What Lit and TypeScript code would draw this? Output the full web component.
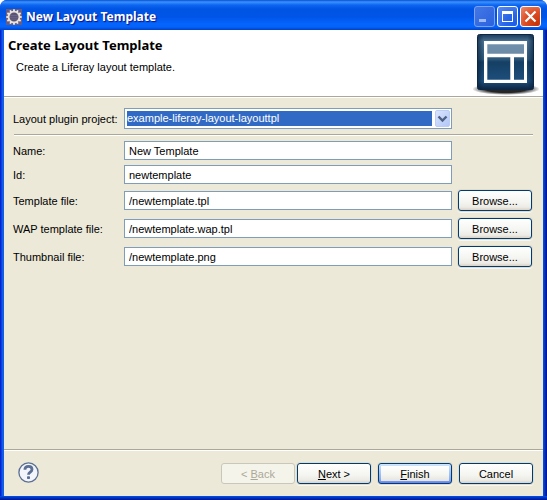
import { LitElement, html, css, svg } from "lit";
import { customElement, property } from "lit/decorators.js";

const gearTeeth = Array.from({ length: 12 }, (_, i) => i * 30);

@customElement("xp-title-bar")
export class XpTitleBar extends LitElement {
  @property() heading = "";

  static styles = css`
    :host {
      display: block;
    }
    .bar {
      display: flex;
      align-items: center;
      box-sizing: border-box;
      height: 30px;
      padding: 3px 6px 0 6px;
      gap: 4px;
      border-radius: 7px 7px 0 0;
      background: linear-gradient(
        #0a4fd0 0,
        #3a93ff 2px,
        #0d66f0 5px,
        #0054e3 9px,
        #0055e8 17px,
        #0465fd 24px,
        #0463f8 27px,
        #0040c8 30px
      );
    }
    .app-icon {
      display: block;
      flex: none;
    }
    .title {
      flex: 1;
      margin: 0;
      color: #fff;
      font: bold 12px/16px "Noto Sans", sans-serif;
      text-shadow: 1px 1px 1px #0f1089;
      white-space: nowrap;
    }
    .controls {
      display: flex;
      gap: 2px;
    }
    button {
      width: 21px;
      height: 21px;
      padding: 0;
      border: 1px solid #fff;
      border-radius: 3px;
      background: radial-gradient(circle at 85% 90%, #1c60e8 0, #2a66e6 40%, #5b8cf2 100%);
    }
    .minimize {
      border-color: #7ba1f0;
      background: linear-gradient(135deg, #4377e6, #2b62dd);
    }
    .close {
      background: radial-gradient(circle at 85% 90%, #c83408 0, #dc4b22 50%, #ee8a6c 100%);
    }
    button svg {
      display: block;
    }
  `;

  render() {
    return html`
      <header class="bar">
        <svg class="app-icon" width="16" height="16" viewBox="0 0 16 16" aria-hidden="true">
          <rect width="16" height="16" fill="#6a5c80" />
          ${gearTeeth.map(
            (a) => svg`<rect x="7.1" y="0.3" width="1.8" height="3" fill="#efece4" transform="rotate(${a} 8 8)" />`
          )}
          <circle cx="8" cy="8" r="5.4" fill="#5a5274" stroke="#e6e2da" stroke-width="1.8" />
          <path d="M4 6.5h8M3.7 8.3h8.6M4.2 10.1h7.6" stroke="#746c90" stroke-width="0.7" />
        </svg>
        <h1 class="title">${this.heading}</h1>
        <div class="controls">
          <button class="minimize" aria-label="Minimize">
            <svg width="19" height="19" viewBox="0 0 19 19"><path d="M4 12h7v3H4z" fill="#9cb9f5" /></svg>
          </button>
          <button class="maximize" aria-label="Maximize">
            <svg width="19" height="19" viewBox="0 0 19 19">
              <path d="M4 4h11v11H4zM5 7v7h9V7z" fill="#fff" fill-rule="evenodd" />
            </svg>
          </button>
          <button class="close" aria-label="Close">
            <svg width="19" height="19" viewBox="0 0 19 19">
              <path d="M4.5 4.5l10 10M14.5 4.5l-10 10" stroke="#fff" stroke-width="2.2" />
            </svg>
          </button>
        </div>
      </header>
    `;
  }
}

@customElement("app-root")
export class AppRoot extends LitElement {
  static styles = css`
    :host {
      display: block;
      color: #000;
      font: 11px/13px "Liberation Sans", Arial, sans-serif;
    }
    .window {
      display: flex;
      flex-direction: column;
      box-sizing: border-box;
      min-height: 100vh;
      border-radius: 7px 7px 0 0;
      background: #0831d9;
    }
    .client {
      flex: 1;
      display: flex;
      flex-direction: column;
      padding: 0 4px 4px;
      background:
        linear-gradient(#0050ee, #00138c) bottom / 100% 4px no-repeat,
        linear-gradient(to right, #0019cf 0, #0831d9 1px, #166aee 3px, #0855dd 4px) left / 4px 100% no-repeat,
        linear-gradient(to left, #00138c 0, #001ea0 1px, #0441d8 3px, #0855dd 4px) right / 4px 100% no-repeat;
    }
    .banner {
      display: flex;
      justify-content: space-between;
      height: 66px;
      background: #fff;
      border-bottom: 1px solid #aca899;
    }
    .banner-text {
      padding: 7px 4px;
    }
    .banner h2 {
      margin: 0;
      font: bold 13px/17px "Noto Sans", sans-serif;
    }
    .banner p {
      margin: 7px 0 0 8px;
    }
    .logo {
      display: block;
      flex: none;
      margin: 3px 4px 0 0;
    }
    .page {
      flex: 1;
      display: flex;
      flex-direction: column;
      background: #ece9d8;
      box-shadow: inset 0 1px 0 #fff;
    }
    .form {
      flex: 1;
      display: grid;
      grid-template-columns: 105px 1fr 74px;
      align-content: start;
      align-items: center;
      gap: 5px 6px;
      padding: 11px 11px 11px 9px;
    }
    label {
      grid-column: 1;
      padding-top: 2px;
      white-space: nowrap;
    }
    .field {
      grid-column: 2;
    }
    input,
    select {
      box-sizing: border-box;
      width: 100%;
      min-width: 0;
      margin: 0;
      border: 1px solid #7f9db9;
      border-radius: 0;
      background: #fff;
      color: #000;
      font: inherit;
    }
    input {
      display: block;
      height: 19px;
      padding: 0 4px;
    }
    .combo {
      display: grid;
      grid-template-columns: 1fr 17px;
      align-items: center;
    }
    select {
      grid-area: 1 / 1 / 2 / 3;
      appearance: none;
      height: 21px;
      padding: 2px 19px 2px 2px;
      background:
        linear-gradient(#316ac5, #316ac5) content-box no-repeat,
        linear-gradient(#fff, #fff) padding-box;
      color: #fff;
    }
    .arrow {
      grid-area: 1 / 2;
      display: block;
      pointer-events: none;
    }
    .rule {
      grid-column: 1 / -1;
      width: 100%;
      height: 1px;
      margin: 0 0 0 1px;
      border: 0;
      border-top: 1px solid #aca899;
      background: #fff;
    }
    .push {
      box-sizing: border-box;
      width: 74px;
      height: 21px;
      margin: 1px 0;
      padding: 2px 0 0;
      border: 1px solid #003c74;
      border-radius: 3px;
      background: linear-gradient(#fff, #f4f4f0 60%, #ecebe5 85%, #d8d1c7);
      box-shadow: 0 0 0 1px #e0ddcd, 0 1px 0 1px #f7f6f0;
      color: #000;
      font: inherit;
      white-space: nowrap;
    }
    .push:disabled {
      border-color: #c9c7ba;
      background: #f5f4ea;
      box-shadow: none;
      color: #aca899;
    }
    .push.default {
      background:
        linear-gradient(#fff, #f4f4f0 60%, #e6e4de) 2px 2px / calc(100% - 4px) calc(100% - 4px) no-repeat,
        linear-gradient(#cee7ff, #bcd4f6 20%, #89adf0 80%, #6982ee);
    }
    .footer {
      display: flex;
      align-items: center;
      height: 45px;
      padding: 1px 10px 0 14px;
      border-top: 1px solid #aca899;
      box-shadow: inset 0 1px 0 #fff;
    }
    .help {
      width: 21px;
      height: 21px;
      margin: 0 auto 2px 0;
      padding: 0;
      border: 0;
      background: none;
    }
    .help svg {
      display: block;
    }
    .steps {
      display: flex;
      gap: 2px;
    }
    .actions {
      display: flex;
      gap: 7px;
    }
  `;

  private files = [
    { id: "template", label: "Template file:", value: "/newtemplate.tpl" },
    { id: "wap", label: "WAP template file:", value: "/newtemplate.wap.tpl" },
    { id: "thumbnail", label: "Thumbnail file:", value: "/newtemplate.png" },
  ];

  private logo() {
    return html`
      <svg class="logo" width="66" height="62" viewBox="0 0 66 62" aria-hidden="true">
        <defs>
          <linearGradient id="tile" x1="0" y1="0" x2="0" y2="1">
            <stop offset="0" stop-color="#1c3c5c" />
            <stop offset="0.12" stop-color="#49708f" />
            <stop offset="0.45" stop-color="#2c5678" />
            <stop offset="0.5" stop-color="#153f64" />
            <stop offset="0.85" stop-color="#1d4f7c" />
            <stop offset="1" stop-color="#0b2440" />
          </linearGradient>
          <linearGradient id="side" x1="0" y1="0" x2="1" y2="0">
            <stop offset="0" stop-color="#08203a" stop-opacity="0.6" />
            <stop offset="0.1" stop-color="#08203a" stop-opacity="0" />
            <stop offset="0.9" stop-color="#08203a" stop-opacity="0" />
            <stop offset="1" stop-color="#08203a" stop-opacity="0.6" />
          </linearGradient>
          <radialGradient id="shade">
            <stop offset="0.6" stop-color="#000" stop-opacity="0.85" />
            <stop offset="1" stop-color="#000" stop-opacity="0" />
          </radialGradient>
        </defs>
        <ellipse cx="33" cy="56" rx="34" ry="6" fill="url(#shade)" />
        <rect x="4.5" y="1.5" width="56" height="55" rx="2" fill="url(#tile)" stroke="#0c2743" />
        <rect x="5" y="2" width="55" height="54" rx="2" fill="url(#side)" />
        <rect x="14" y="11" width="37" height="10" fill="#8fa9c0" opacity="0.6" />
        <path
          fill="#fff"
          fill-rule="evenodd"
          d="M11 8h43v42H11zM14.3 11.3v9.4h36.700V11.300zM14.300 24.300v22.400h23V24.300zM41 24.300v22.400h10V24.300z"
        />
      </svg>
    `;
  }

  render() {
    return html`
      <div class="window">
        <xp-title-bar heading="New Layout Template"></xp-title-bar>
        <main class="client">
          <div class="banner">
            <div class="banner-text">
              <h2>Create Layout Template</h2>
              <p>Create a Liferay layout template.</p>
            </div>
            ${this.logo()}
          </div>
          <div class="page">
            <div class="form">
              <label for="project">Layout plugin project:</label>
              <div class="field combo">
                <select id="project">
                  <option>example-liferay-layout-layouttpl</option>
                </select>
                <svg class="arrow" width="15" height="17" viewBox="0 0 15 17" aria-hidden="true">
                  <defs>
                    <linearGradient id="drop" x1="0" y1="0" x2="1" y2="1">
                      <stop offset="0" stop-color="#dce6fd" />
                      <stop offset="1" stop-color="#b0c6f7" />
                    </linearGradient>
                  </defs>
                  <rect x="0.5" y="0.5" width="14" height="16" rx="1.5" fill="url(#drop)" stroke="#bccdf5" />
                  <path d="M3.5 6.5l4 4 4-4" fill="none" stroke="#4d6185" stroke-width="2.4" />
                </svg>
              </div>
              <hr class="rule" />
              <label for="name">Name:</label>
              <div class="field"><input id="name" type="text" .value=${"New Template"} /></div>
              <label for="ident">Id:</label>
              <div class="field"><input id="ident" type="text" .value=${"newtemplate"} /></div>
              ${this.files.map(
                (f) => html`
                  <label for=${f.id}>${f.label}</label>
                  <div class="field"><input id=${f.id} type="text" .value=${f.value} /></div>
                  <button class="push">Browse...</button>
                `
              )}
            </div>
            <div class="footer">
              <button class="help" aria-label="Help">
                <svg width="21" height="21" viewBox="0 0 21 21">
                  <circle cx="10.5" cy="10.5" r="9.6" fill="#f3f5fa" stroke="#5b6f94" stroke-width="1.3" />
                  <path
                    d="M6.9 7.8c0-2.4 1.4-3.4 3.6-3.4 2.2 0 3.5 1.2 3.5 3 0 2.7-3.5 2.7-3.5 5.4"
                    fill="none"
                    stroke="#5b6f94"
                    stroke-width="2.8"
                  />
                  <rect x="9" y="14.2" width="3" height="2.8" rx="0.8" fill="#5b6f94" />
                </svg>
              </button>
              <div class="actions">
                <div class="steps">
                  <button class="push" disabled>&lt; <u>B</u>ack</button>
                  <button class="push"><u>N</u>ext &gt;</button>
                </div>
                <button class="push default"><u>F</u>inish</button>
                <button class="push">Cancel</button>
              </div>
            </div>
          </div>
        </main>
      </div>
    `;
  }
}
